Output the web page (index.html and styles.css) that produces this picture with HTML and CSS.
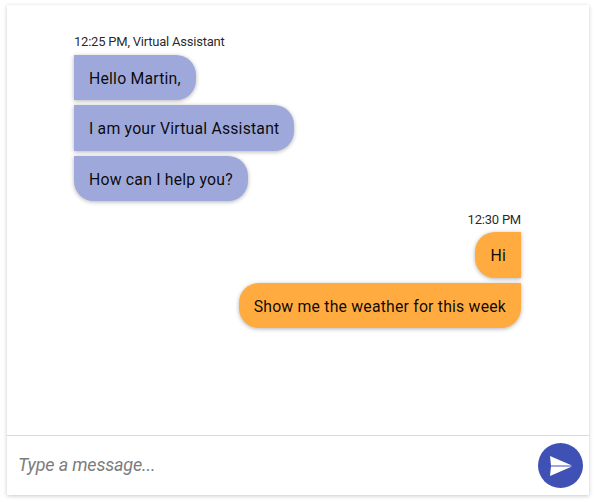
FILE: index.html
```html
<!DOCTYPE html>
<html lang="en">
<head>
<meta charset="utf-8">
<title>Chat</title>
<link rel="stylesheet" href="styles.css">
</head>
<body>
<main class="chat">
  <section class="messages">
    <div class="group bot">
      <div class="meta">12:25 PM, Virtual Assistant</div>
      <div class="bubble">Hello Martin,</div>
      <div class="bubble">I am your Virtual Assistant</div>
      <div class="bubble">How can I help you?</div>
    </div>
    <div class="group user">
      <div class="meta">12:30 PM</div>
      <div class="bubble">Hi</div>
      <div class="bubble">Show me the weather for this week</div>
    </div>
  </section>
  <form class="composer">
    <input class="field" type="text" placeholder="Type a message...">
    <button class="send" type="button" aria-label="Send">
      <svg viewBox="0 0 22 20" width="22" height="20"><path d="M0 0L22 9.5H1Z M1 10.5H22L0 20Z" fill="#fff"/></svg>
    </button>
  </form>
</main>
</body>
</html>
```
FILE: styles.css
```css
* { box-sizing: border-box; }
body { margin: 0; background: #fff; font-family: Roboto, sans-serif; color: rgba(0,0,0,.87); }
.chat {
  display: flex;
  flex-direction: column;
  width: 582px;
  height: 490px;
  margin: 5px 6px 7px 7px;
  background: #fff;
  box-shadow: 0 1px 4px rgba(0,0,0,.22);
}
.messages { flex: 1; padding: 28.9px 68px 0 67px; }
.group { display: flex; flex-direction: column; gap: 5.1px; align-items: flex-start; }
.user { align-items: flex-end; margin-top: 10.6px; }
.meta { font-size: 13px; line-height: 16px; letter-spacing: -.22px; }
.user .meta { margin-bottom: -.4px; }
.bubble {
  height: 45.3px;
  padding: 0 15px;
  font-size: 15.8px;
  line-height: 47px;
  letter-spacing: .2px;
  color: rgba(0,0,0,.94);
  box-shadow: 0 1px 4px rgba(0,0,0,.3);
}
.bot .bubble { background: #9fa8da; border-radius: 0 20px 20px 0; }
.bot .bubble:last-child { border-bottom-left-radius: 20px; }
.user .bubble { background: #ffab40; border-radius: 20px 0 0 20px; }
.user .bubble:last-child { border-bottom-right-radius: 20px; }
.composer {
  display: flex;
  align-items: center;
  height: 60px;
  padding: 0 6px 0 11px;
  border-top: 1px solid #d9d9d9;
}
.field {
  flex: 1;
  min-width: 0;
  padding: 0 0 3px;
  border: 0;
  outline: 0;
  background: none;
  font: 18px Roboto, sans-serif;
  letter-spacing: -.18px;
}
.field::placeholder { color: #7c7c7c; font-style: italic; }
.send {
  display: flex;
  align-items: center;
  justify-content: center;
  width: 45px;
  height: 45px;
  padding: 0;
  border: 0;
  border-radius: 50%;
  background: #3f51b5;
}
```
